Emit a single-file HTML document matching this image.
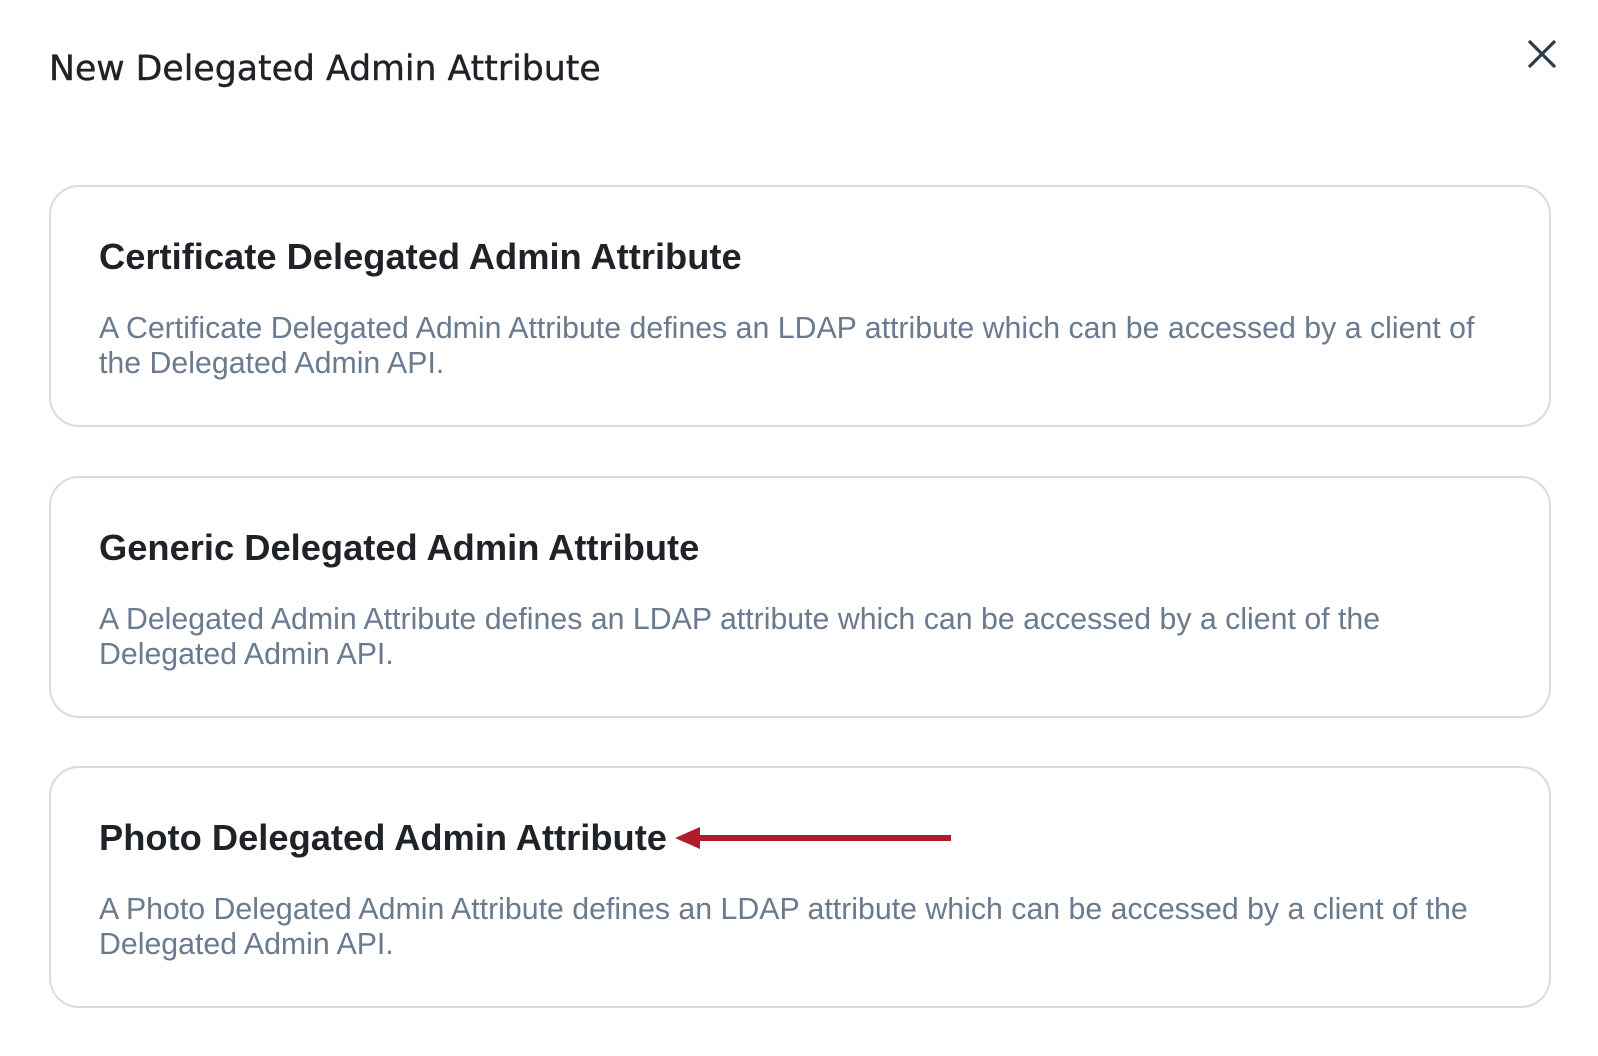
<!DOCTYPE html>
<html><head><style>
body{margin:0;width:1598px;height:1056px;background:#fff;font-family:"Liberation Sans",sans-serif;position:relative;overflow:hidden}
.t{position:absolute;left:49px;top:46px;font-family:"DejaVu Sans","Liberation Sans",sans-serif;font-size:34.7px;color:#1f2328;line-height:46px;-webkit-text-stroke:0.4px #1f2328}
.card{position:absolute;left:49px;width:1502px;height:242px;border:2px solid #d8dbe3;border-radius:30px;box-sizing:border-box}
.h{position:absolute;left:48px;top:48px;font-weight:bold;font-size:36.3px;color:#1f2328;line-height:44px;white-space:nowrap}
.d{position:absolute;left:48px;top:124px;width:1400px;font-size:30.3px;color:#6a7a8f;line-height:35px}
</style></head><body>
<div class="t">New Delegated Admin Attribute</div>
<svg style="position:absolute;left:1524px;top:36px" width="36" height="36"><path d="M5 5L31 31M31 5L5 31" stroke="#2d3b4e" stroke-width="3.2"/></svg>
<div class="card" style="top:185px"><div class="h">Certificate Delegated Admin Attribute</div><div class="d">A Certificate Delegated Admin Attribute defines an LDAP attribute which can be accessed by a client of the Delegated Admin API.</div></div>
<div class="card" style="top:476px"><div class="h">Generic Delegated Admin Attribute</div><div class="d">A Delegated Admin Attribute defines an LDAP attribute which can be accessed by a client of the Delegated Admin API.</div></div>
<div class="card" style="top:766px"><div class="h">Photo Delegated Admin Attribute</div><div class="d">A Photo Delegated Admin Attribute defines an LDAP attribute which can be accessed by a client of the Delegated Admin API.</div></div>
<svg style="position:absolute;left:670px;top:825px" width="285" height="26"><path d="M30 13H281" stroke="#b01c2e" stroke-width="6"/><path d="M5 13L30 2V24Z" fill="#b01c2e"/></svg>
</body></html>
